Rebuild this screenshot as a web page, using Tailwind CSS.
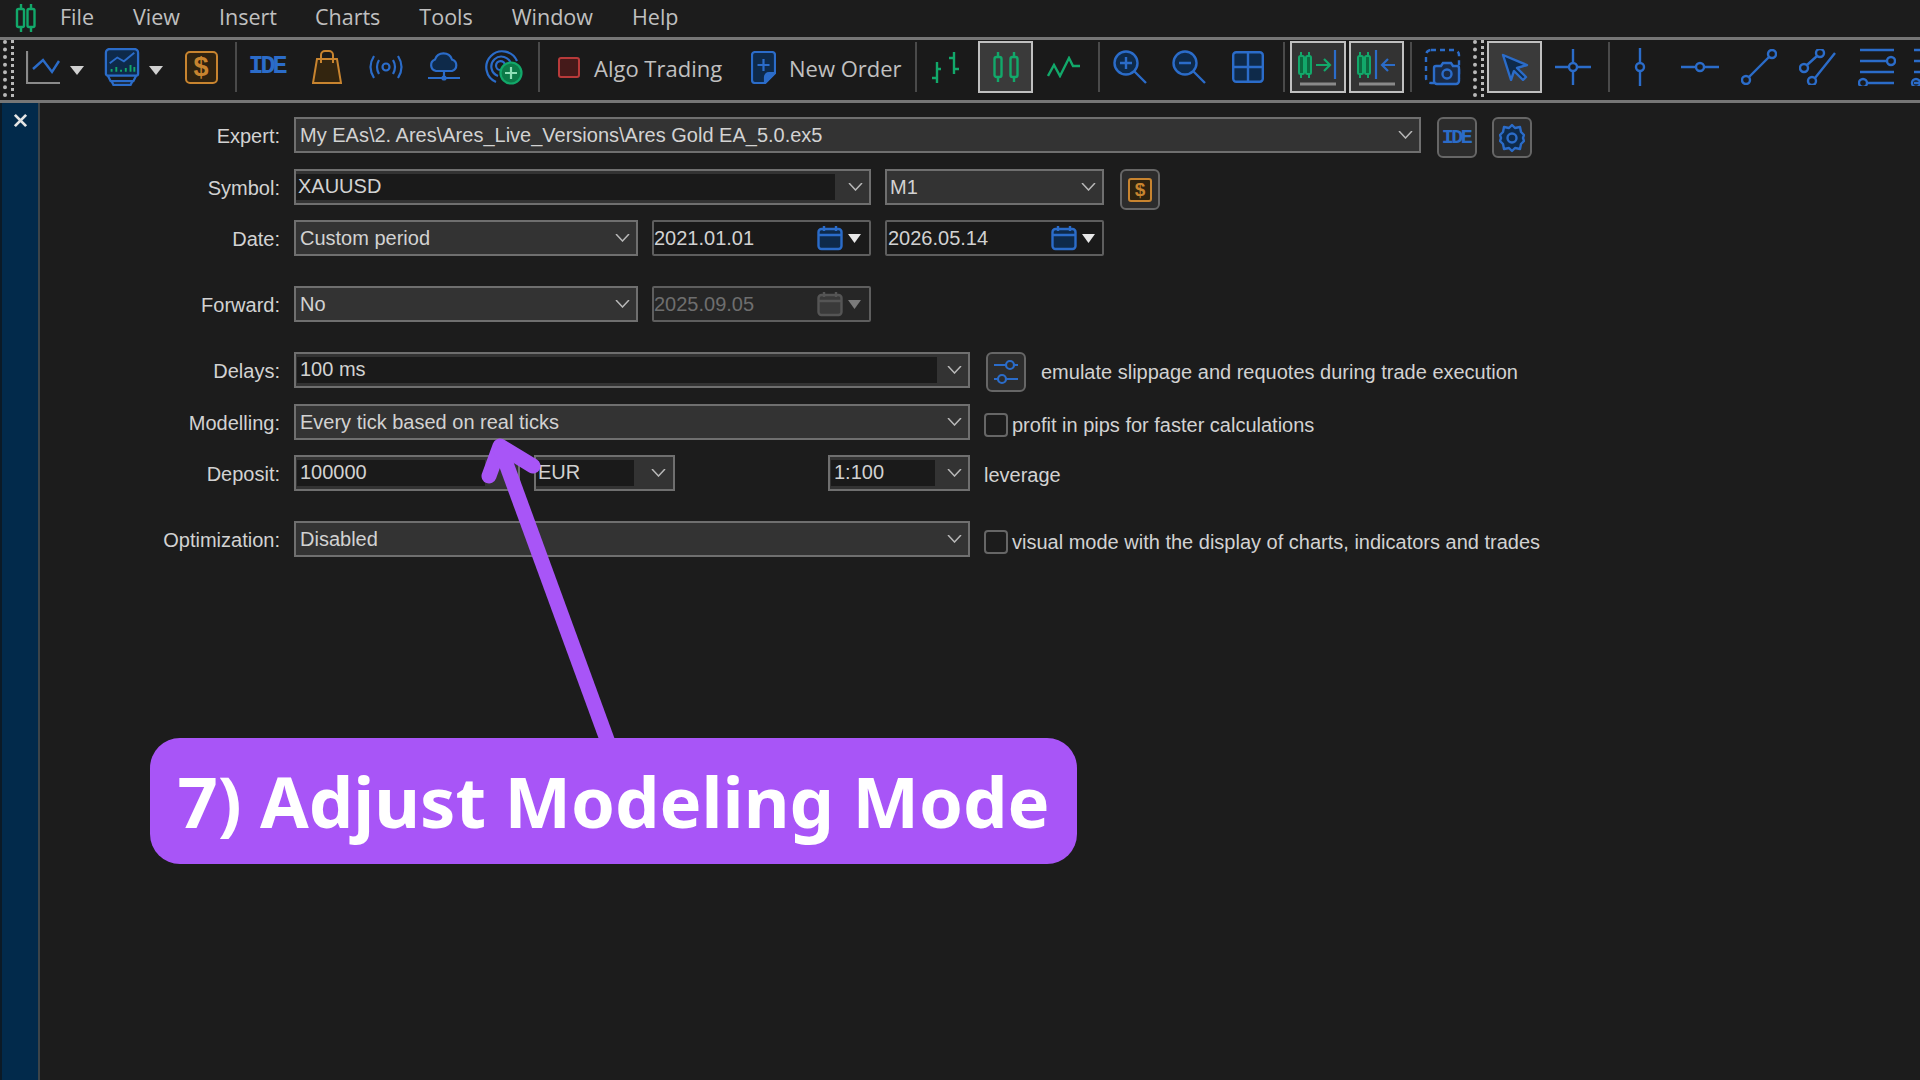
<!doctype html>
<html><head><meta charset="utf-8"><script src="https://cdn.jsdelivr.net/npm/@tailwindcss/browser@4"></script></head>
<body class="bg-[#1c1c1c] m-0">
<div class="relative w-[1920px] h-[1080px] overflow-hidden bg-[#1c1c1c] font-['Liberation_Sans'] text-[20px] text-[#d2d2d2] flex flex-col">

<!-- menu bar -->
<div class="h-[37px] flex items-center shrink-0 font-['Open_Sans'] text-[21.5px] text-[#c0c0c0] pb-[2px]">
  <svg class="ml-[14px] w-[24px] h-[32px]" viewBox="0 0 24 32" fill="none" stroke="#12a86a" stroke-width="2.4"><path d="M7 2v5M7 25v5M17 2v5M17 25v5"/><rect x="3" y="7" width="7" height="18" rx="1.5"/><rect x="13.500" y="7" width="7" height="18" rx="1.5"/></svg>
  <span class="ml-[22px]">File</span><span class="ml-[39px]">View</span><span class="ml-[39px]">Insert</span><span class="ml-[38px]">Charts</span><span class="ml-[39px]">Tools</span><span class="ml-[39px]">Window</span><span class="ml-[39px]">Help</span>
</div>

<!-- toolbar -->
<div class="h-[66px] shrink-0 border-y-[3px] border-[#767676] bg-[#1a1a1a] flex items-start text-[#c0c0c0] font-['Open_Sans'] text-[22px]">
  <div class="w-[24px] h-[57px] flex gap-[4px] pl-[3px]"><div class="w-[4px] h-full border-l-[4px] border-dotted border-[#b8b8b8]"></div><div class="w-[4px] h-full border-l-[3px] border-dotted border-[#b8b8b8]"></div></div>

  <div class="w-[40px] h-[52px] flex items-center justify-center mt-[1px]"><svg class="w-[36px] h-[36px]" viewBox="0 0 36 36" fill="none"><path d="M1 2v32h33" stroke="#8a8a8a" stroke-width="2.2"/><path d="M7 20l10-9 9 12 7-11" stroke="#2b6cc9" stroke-width="2.4"/></svg></div>
  <div class="w-[26px] h-[52px] flex items-center justify-center mt-[4px]"><svg class="w-[14px] h-[9px]" viewBox="0 0 14 9"><path d="M0 0h14l-7 9z" fill="#d0d0d0"/></svg></div>
  <div class="ml-[10px] w-[43px] h-[52px] flex items-center justify-center mt-[1px]"><svg class="w-[36px] h-[38px]" viewBox="0 0 38 40" fill="none" stroke="#2b6cc9" stroke-width="2.4"><path d="M6 1h26a4 4 0 0 1 4 4v22a2 2 0 0 1-2 2H4a2 2 0 0 1-2-2V5a4 4 0 0 1 4-4z" fill="#0e2a4a"/><path d="M4 29l3 6h24l3-6M8 35l2 4h18l2-4" /><path d="M6 16l8-6 7 4 11-9" stroke-width="2"/><path d="M8 25v-3M13 25v-5M18 25v-2M23 25v-4M28 25v-7M32 25v-5" stroke="#12a86a" stroke-width="2"/></svg></div>
  <div class="ml-[1px] w-[24px] h-[52px] flex items-center justify-center mt-[4px]"><svg class="w-[14px] h-[9px]" viewBox="0 0 14 9"><path d="M0 0h14l-7 9z" fill="#d0d0d0"/></svg></div>
  <div class="w-[66px] h-[52px] flex items-center justify-center mt-[1px]"><div class="w-[33px] h-[33px] border-2 border-[#c8842f] rounded-[5px] bg-[#2e2210] text-[#c8842f] flex items-center justify-center font-bold text-[27px] font-['Liberation_Sans'] leading-none">$</div></div>
  <div class="w-[2px] h-[50px] mt-[2px] bg-[#4a4a4a] ml-[1px]"></div>

  <div class="w-[62px] h-[52px] flex items-center justify-center mt-[1px] text-[#2b6cc9] font-['Liberation_Mono'] font-bold text-[25px] tracking-[-3px] pr-[3px]">IDE</div>
  <div class="w-[56px] h-[52px] flex items-center justify-center mt-[1px]"><svg class="w-[30px] h-[34px]" viewBox="0 0 30 34" fill="none" stroke="#c8842f" stroke-width="2"><path d="M5 9h20l4 24H1z" fill="#33250f"/><path d="M9 13V5a4 4 0 0 1 4-4h4a4 4 0 0 1 4 4v8"/></svg></div>
  <div class="w-[62px] h-[52px] flex items-center justify-center mt-[1px]"><svg class="w-[34px] h-[24px]" viewBox="0 0 34 24" fill="none" stroke="#2b6cc9" stroke-width="2.2"><circle cx="17" cy="12" r="3.500"/><path d="M10 5q-4 7 0 14M24 5q4 7 0 14M5 1q-7 11 0 22M29 1q7 11 0 22"/></svg></div>
  <div class="w-[54px] h-[52px] flex items-center justify-center mt-[1px]"><svg class="w-[34px] h-[30px]" viewBox="0 0 34 30" fill="none" stroke="#2b6cc9" stroke-width="2.2"><path d="M9 19a6 6 0 0 1-1-11.500a9 9 0 0 1 17 0a6 6 0 0 1 0 11.500z" fill="#0e2a4a"/><path d="M17 19v7M1 26h32" /><circle cx="17" cy="26" r="1.500"/></svg></div>
  <div class="w-[66px] h-[52px] flex items-center justify-center mt-[1px]"><svg class="w-[38px] h-[36px]" viewBox="0 0 38 36" fill="none" stroke="#2b6cc9" stroke-width="2.2"><path d="M11 33A16 16 0 1 1 32 12"/><path d="M13 27A10 10 0 1 1 26 15"/><path d="M15 21a4.500 4.500 0 1 1 5-5"/><circle cx="26" cy="24" r="10.500" fill="#0c7a48" stroke="#12a86a"/><path d="M26 18v12M20 24h12" stroke="#8fe0b8"/></svg></div>
  <div class="w-[2px] h-[50px] mt-[2px] bg-[#4a4a4a] ml-[1px]"></div>

  <div class="ml-[18px] h-[52px] flex items-center mt-[1px]"><div class="w-[22px] h-[21px] rounded-[3px] border-2 border-[#b83a3a] bg-[#451a1a]"></div><span class="ml-[14px] whitespace-nowrap w-[130px] pt-[2px]">Algo Trading</span></div>
  <div class="ml-[27px] h-[52px] flex items-center mt-[1px]"><svg class="w-[25px] h-[33px]" viewBox="0 0 25 33" fill="none" stroke="#2b6cc9" stroke-width="2.2"><path d="M4 1h17a3 3 0 0 1 3 3v18l-10 10H4a3 3 0 0 1-3-3V4a3 3 0 0 1 3-3z" fill="#0e2a4a"/><path d="M24 22h-6a4 4 0 0 0-4 4v6z" fill="#2b6cc9"/><path d="M12.500 8v12M6.500 14h12"/></svg><span class="ml-[13px] whitespace-nowrap w-[108px] pt-[2px]">New Order</span></div>
  <div class="ml-[18px] w-[2px] h-[50px] mt-[2px] bg-[#4a4a4a]"></div>

  <div class="w-[58px] h-[52px] flex items-center justify-center mt-[1px]"><svg class="w-[32px] h-[32px]" viewBox="0 0 32 32" fill="none" stroke="#12a86a" stroke-width="2.4"><path d="M7 11v21M2 27h5M7 18h4M24 1v22M19 7h5M24 18h5"/></svg></div>
  <div class="ml-[3px] mt-[1px] w-[55px] h-[52px] border-2 border-[#c0c0c0] bg-[#3a3a3a] flex items-center justify-center"><svg class="w-[26px] h-[32px]" viewBox="0 0 26 32" fill="none" stroke="#12a86a" stroke-width="2.400"><path d="M5 1v5M5 26v5M21 1v5M21 26v5"/><rect x="1.500" y="6" width="7" height="20" rx="2"/><rect x="17.500" y="6" width="7" height="20" rx="2"/></svg></div>
  <div class="ml-[3px] w-[56px] h-[52px] flex items-center justify-center mt-[1px]"><svg class="w-[34px] h-[22px]" viewBox="0 0 34 22" fill="none" stroke="#12a86a" stroke-width="2.4"><path d="M1 20l6-11 6 11 9-18 4 8h7"/></svg></div>
  <div class="ml-[6px] w-[2px] h-[50px] mt-[2px] bg-[#4a4a4a]"></div>

  <div class="w-[59px] h-[52px] flex items-center justify-center mt-[1px]"><svg class="w-[34px] h-[34px]" viewBox="0 0 34 34" fill="none" stroke="#2b6cc9" stroke-width="2.4"><circle cx="13" cy="13" r="11.500" fill="#0e2a4a"/><path d="M21 21l12 12M13 7v12M7 13h12"/></svg></div>
  <div class="w-[59px] h-[52px] flex items-center justify-center mt-[1px]"><svg class="w-[34px] h-[34px]" viewBox="0 0 34 34" fill="none" stroke="#2b6cc9" stroke-width="2.4"><circle cx="13" cy="13" r="11.500" fill="#0e2a4a"/><path d="M21 21l12 12M7 13h12"/></svg></div>
  <div class="w-[60px] h-[52px] flex items-center justify-center mt-[1px]"><svg class="w-[32px] h-[32px]" viewBox="0 0 32 32" fill="none" stroke="#2b6cc9" stroke-width="2.4"><rect x="1.200" y="1.200" width="29.600" height="29.600" rx="3" fill="#0e2a4a"/><path d="M16 1v30M1 16h30"/></svg></div>
  <div class="ml-[5px] w-[2px] h-[50px] mt-[2px] bg-[#4a4a4a]"></div>

  <div class="ml-[5px] mt-[1px] w-[56px] h-[52px] border-2 border-[#c0c0c0] bg-[#333333] flex items-center justify-center"><svg class="w-[40px] h-[38px]" viewBox="0 0 40 38" fill="none" stroke-width="2"><path d="M3 4v26M11 4v26" stroke="#12a86a"/><rect x="1" y="8" width="5" height="18" rx="1.500" stroke="#12a86a" fill="#0c6a40"/><rect x="8" y="8" width="5" height="18" rx="1.500" stroke="#12a86a" fill="#0c6a40"/><path d="M18 17h14M26 11l6 6-6 6" stroke="#12a86a" stroke-width="2.200"/><path d="M37 2v29" stroke="#2b6cc9" stroke-width="2.200"/><path d="M2 36h36" stroke="#8a8a8a" stroke-width="3"/></svg></div>
  <div class="ml-[3px] mt-[1px] w-[55px] h-[52px] border-2 border-[#c0c0c0] bg-[#333333] flex items-center justify-center"><svg class="w-[40px] h-[38px]" viewBox="0 0 40 38" fill="none" stroke-width="2"><path d="M3 4v26M11 4v26" stroke="#12a86a"/><rect x="1" y="8" width="5" height="18" rx="1.500" stroke="#12a86a" fill="#0c6a40"/><rect x="8" y="8" width="5" height="18" rx="1.500" stroke="#12a86a" fill="#0c6a40"/><path d="M19 2v29" stroke="#2b6cc9" stroke-width="2.200"/><path d="M38 17H25M31 11l-6 6 6 6" stroke="#2b6cc9" stroke-width="2.200"/><path d="M2 36h36" stroke="#8a8a8a" stroke-width="3"/></svg></div>
  <div class="ml-[6px] w-[2px] h-[50px] mt-[2px] bg-[#4a4a4a]"></div>

  <div class="w-[60px] h-[52px] flex items-center justify-center mt-[1px]"><svg class="w-[38px] h-[38px]" viewBox="0 0 38 38" fill="none" stroke="#2b6cc9" stroke-width="2.400"><rect x="3" y="2" width="33" height="33" rx="5" stroke-dasharray="5 4"/><path d="M11 20a2 2 0 0 1 2-2h5l2-3h8l2 3h4a2 2 0 0 1 2 2v13a3 3 0 0 1-3 3H14a3 3 0 0 1-3-3z" fill="#1a2a44"/><circle cx="24" cy="26" r="4.500"/></svg></div>
  <div class="ml-[1px] w-[12px] h-[57px] flex gap-[4px]"><div class="w-[4px] h-full border-l-[4px] border-dotted border-[#b8b8b8]"></div><div class="w-[3px] h-full border-l-[3px] border-dotted border-[#b8b8b8]"></div></div>
  <div class="ml-[2px] mt-[1px] w-[55px] h-[52px] border-2 border-[#c0c0c0] bg-[#3a3a3a] flex items-center justify-center"><svg class="w-[28px] h-[28px]" viewBox="0 0 28 28" fill="none"><path d="M2 2l24 10-10 3 9 9-3 3-9-9-3 9z" fill="#0e2a4a" stroke="#2b6cc9" stroke-width="2.400" stroke-linejoin="round"/></svg></div>
  <div class="ml-[2px] w-[58px] h-[52px] flex items-center justify-center mt-[1px]"><svg class="w-[36px] h-[36px]" viewBox="0 0 36 36" fill="none" stroke="#2b6cc9" stroke-width="2.400"><circle cx="18" cy="18" r="4"/><path d="M18 0v14M18 22v14M0 18h14M22 18h14"/></svg></div>
  <div class="ml-[6px] w-[2px] h-[50px] mt-[2px] bg-[#4a4a4a]"></div>

  <div class="w-[60px] h-[52px] flex items-center justify-center mt-[1px]"><svg class="w-[16px] h-[38px]" viewBox="0 0 16 38" fill="none" stroke="#2b6cc9" stroke-width="2.400"><circle cx="8" cy="19" r="4"/><path d="M8 0v15M8 23v15"/></svg></div>
  <div class="w-[59px] h-[52px] flex items-center justify-center mt-[1px]"><svg class="w-[38px] h-[12px]" viewBox="0 0 38 12" fill="none" stroke="#2b6cc9" stroke-width="2.400"><circle cx="19" cy="6" r="4"/><path d="M0 6h15M23 6h15"/></svg></div>
  <div class="w-[59px] h-[52px] flex items-center justify-center mt-[1px]"><svg class="w-[36px] h-[36px]" viewBox="0 0 36 36" fill="none" stroke="#2b6cc9" stroke-width="2.400"><circle cx="5" cy="31" r="4"/><circle cx="31" cy="5" r="4"/><path d="M8 28L28 8"/></svg></div>
  <div class="w-[59px] h-[52px] flex items-center justify-center mt-[1px]"><svg class="w-[38px] h-[36px]" viewBox="0 0 38 36" fill="none" stroke="#2b6cc9" stroke-width="2.400"><circle cx="5" cy="19" r="4"/><circle cx="21" cy="4" r="4"/><circle cx="13" cy="32" r="4"/><path d="M8 16l10-9M16 29L36 4"/></svg></div>
  <div class="w-[59px] h-[52px] flex items-center justify-center mt-[1px]"><svg class="w-[38px] h-[38px]" viewBox="0 0 38 38" fill="none" stroke="#2b6cc9" stroke-width="2.400"><path d="M2 2h34M2 13h28M2 24h34M9 35h27"/><circle cx="33" cy="13" r="4" fill="#1a1a1a"/><circle cx="5" cy="35" r="4" fill="#1a1a1a"/></svg></div>
  <div class="ml-[4px] h-[52px] flex items-center mt-[1px]"><svg class="w-[10px] h-[38px]" viewBox="0 0 10 38" fill="none" stroke="#2b6cc9" stroke-width="2.400"><path d="M4 2h6M4 13h6M4 24h6M4 35h6"/><circle cx="6" cy="35" r="4"/></svg></div>
</div>

<!-- body -->
<div class="flex-1 flex min-h-0">
  <div class="w-[40px] shrink-0 bg-[#022a4b] border-l-[2px] border-l-[#0c1a26] border-r-[2px] border-r-[#3d4448] flex justify-center pt-[10px]">
    <svg class="w-[15px] h-[15px]" viewBox="0 0 16 16" fill="none" stroke="#e4e4e4" stroke-width="3"><path d="M2 2l12 12M14 2L2 14"/></svg>
  </div>
  <div class="flex-1 pt-[14px] flex flex-col">

    <!-- Expert -->
    <div class="flex items-start h-[36px]">
      <div class="w-[240px] text-right h-[36px] leading-[39px] shrink-0">Expert:</div>
      <div class="ml-[14px] w-[1127px] h-[36px] border-2 border-[#6f6f6f] bg-[#333333] flex items-center justify-between pl-[4px] pr-[6px]"><span>My EAs\2. Ares\Ares_Live_Versions\Ares Gold EA_5.0.ex5</span><svg class="w-[15px] h-[8px]" viewBox="0 0 15 8" fill="none" stroke="#b8b8b8" stroke-width="1.500"><path d="M1 0l6.500 7L14 0"/></svg></div>
      <div class="ml-[16px] w-[40px] h-[41px] border-2 border-[#666666] rounded-[6px] bg-[#2c2c2c] flex items-center justify-center text-[#2b6cc9] font-['Liberation_Mono'] font-bold text-[20px] tracking-[-2.500px] pr-[2px]">IDE</div>
      <div class="ml-[15px] w-[40px] h-[41px] border-2 border-[#666666] rounded-[6px] bg-[#2c2c2c] flex items-center justify-center"><svg class="w-[26px] h-[30px]" viewBox="0 0 26 30" fill="none" stroke="#2b6cc9" stroke-width="2.400"><path d="M13 2l3 3 5-1 1 5 3 3-1 3 1 3-3 3-1 5-5-1-3 3-3-3-5 1-1-5-3-3 1-3-1-3 3-3 1-5 5 1z" fill="#0e2a4a" stroke-linejoin="round"/><circle cx="13" cy="15" r="4.500"/></svg></div>
    </div>

    <!-- Symbol -->
    <div class="flex items-start h-[36px] mt-[16px]">
      <div class="w-[240px] text-right leading-[39px] shrink-0">Symbol:</div>
      <div class="ml-[14px] w-[577px] h-[36px] border-2 border-[#6f6f6f] bg-[#333333] flex items-center justify-between pr-[6px] py-[3px]"><span class="w-[539px] h-full bg-[#1a1a1a] pl-[2px] leading-[24px]">XAUUSD</span><svg class="w-[15px] h-[8px]" viewBox="0 0 15 8" fill="none" stroke="#b8b8b8" stroke-width="1.500"><path d="M1 0l6.500 7L14 0"/></svg></div>
      <div class="ml-[14px] w-[219px] h-[36px] border-2 border-[#6f6f6f] bg-[#333333] flex items-center justify-between pl-[3px] pr-[6px]"><span>M1</span><svg class="w-[15px] h-[8px]" viewBox="0 0 15 8" fill="none" stroke="#b8b8b8" stroke-width="1.500"><path d="M1 0l6.500 7L14 0"/></svg></div>
      <div class="ml-[16px] w-[40px] h-[41px] border-2 border-[#666666] rounded-[6px] bg-[#2c2c2c] flex items-center justify-center"><div class="w-[24px] h-[24px] border-2 border-[#c8842f] rounded-[3px] bg-[#2e2210] text-[#c8842f] flex items-center justify-center font-bold text-[19px] leading-none">$</div></div>
    </div>

    <!-- Date -->
    <div class="flex items-start h-[36px] mt-[15px]">
      <div class="w-[240px] text-right leading-[39px] shrink-0">Date:</div>
      <div class="ml-[14px] w-[344px] h-[36px] border-2 border-[#6f6f6f] bg-[#333333] flex items-center justify-between pl-[4px] pr-[6px]"><span>Custom period</span><svg class="w-[15px] h-[8px]" viewBox="0 0 15 8" fill="none" stroke="#b8b8b8" stroke-width="1.500"><path d="M1 0l6.500 7L14 0"/></svg></div>
      <div class="ml-[14px] w-[219px] h-[36px] border-2 border-[#5e5e5e] rounded-[2px] bg-[#1a1a1a] flex items-center pl-[0px] pr-[8px]"><span class="flex-1">2021.01.01</span><svg class="w-[26px] h-[26px]" viewBox="0 0 26 26" fill="none" stroke="#2b6cc9" stroke-width="2.400"><rect x="1.500" y="4" width="23" height="20" rx="3" fill="#0e2a4a"/><path d="M1.500 10h23M7 1v5M19 1v5"/></svg><svg class="ml-[5px] w-[13px] h-[9px]" viewBox="0 0 13 9"><path d="M0 0h13L6.500 9z" fill="#e8e8e8"/></svg></div>
      <div class="ml-[14px] w-[219px] h-[36px] border-2 border-[#5e5e5e] rounded-[2px] bg-[#1a1a1a] flex items-center pl-[1px] pr-[7px]"><span class="flex-1">2026.05.14</span><svg class="w-[26px] h-[26px]" viewBox="0 0 26 26" fill="none" stroke="#2b6cc9" stroke-width="2.400"><rect x="1.500" y="4" width="23" height="20" rx="3" fill="#0e2a4a"/><path d="M1.500 10h23M7 1v5M19 1v5"/></svg><svg class="ml-[5px] w-[13px] h-[9px]" viewBox="0 0 13 9"><path d="M0 0h13L6.500 9z" fill="#e8e8e8"/></svg></div>
    </div>

    <!-- Forward -->
    <div class="flex items-start h-[36px] mt-[30px]">
      <div class="w-[240px] text-right leading-[39px] shrink-0">Forward:</div>
      <div class="ml-[14px] w-[344px] h-[36px] border-2 border-[#6f6f6f] bg-[#333333] flex items-center justify-between pl-[4px] pr-[6px]"><span>No</span><svg class="w-[15px] h-[8px]" viewBox="0 0 15 8" fill="none" stroke="#b8b8b8" stroke-width="1.500"><path d="M1 0l6.500 7L14 0"/></svg></div>
      <div class="ml-[14px] w-[219px] h-[36px] border-2 border-[#5e5e5e] rounded-[2px] bg-[#262626] flex items-center pl-[0px] pr-[8px] text-[#6e6e6e]"><span class="flex-1">2025.09.05</span><svg class="w-[26px] h-[26px]" viewBox="0 0 26 26" fill="#3a3a3a" stroke="#555555" stroke-width="2.400"><rect x="1.500" y="4" width="23" height="20" rx="3"/><path d="M1.500 10h23M7 1v5M19 1v5"/></svg><svg class="ml-[5px] w-[13px] h-[9px]" viewBox="0 0 13 9"><path d="M0 0h13L6.500 9z" fill="#7a7a7a"/></svg></div>
    </div>

    <!-- Delays -->
    <div class="flex items-start h-[36px] mt-[30px]">
      <div class="w-[240px] text-right leading-[39px] shrink-0">Delays:</div>
      <div class="ml-[14px] w-[676px] h-[36px] border-2 border-[#6f6f6f] bg-[#333333] flex items-center justify-between pr-[6px] pl-[1px] py-[3px]"><span class="w-[640px] h-full bg-[#1a1a1a] pl-[3px] leading-[24px]">100 ms</span><svg class="w-[15px] h-[8px]" viewBox="0 0 15 8" fill="none" stroke="#b8b8b8" stroke-width="1.500"><path d="M1 0l6.500 7L14 0"/></svg></div>
      <div class="ml-[16px] w-[40px] h-[40px] border-2 border-[#666666] rounded-[6px] bg-[#2c2c2c] flex items-center justify-center"><svg class="w-[26px] h-[26px]" viewBox="0 0 26 26" fill="none" stroke="#2b6cc9" stroke-width="2.200"><path d="M1 6h12M21 6h4M1 20h4M13 20h12"/><circle cx="17" cy="6" r="4"/><circle cx="9" cy="20" r="4"/></svg></div>
      <div class="ml-[15px] leading-[40px] whitespace-nowrap">emulate slippage and requotes during trade execution</div>
    </div>

    <!-- Modelling -->
    <div class="flex items-start h-[36px] mt-[16px]">
      <div class="w-[240px] text-right leading-[39px] shrink-0">Modelling:</div>
      <div class="ml-[14px] w-[676px] h-[36px] border-2 border-[#6f6f6f] bg-[#333333] flex items-center justify-between pl-[4px] pr-[6px]"><span>Every tick based on real ticks</span><svg class="w-[15px] h-[8px]" viewBox="0 0 15 8" fill="none" stroke="#b8b8b8" stroke-width="1.500"><path d="M1 0l6.500 7L14 0"/></svg></div>
      <div class="ml-[14px] mt-[9px] w-[24px] h-[24px] border-2 border-[#666666] rounded-[4px] bg-[#1c1c1c] shrink-0"></div>
      <div class="ml-[4px] mt-[1px] leading-[40px] whitespace-nowrap">profit in pips for faster calculations</div>
    </div>

    <!-- Deposit -->
    <div class="flex items-start h-[36px] mt-[15px]">
      <div class="w-[240px] text-right leading-[39px] shrink-0">Deposit:</div>
      <div class="ml-[14px] w-[226px] h-[36px] border-2 border-[#6f6f6f] bg-[#333333] flex items-center pr-[1px] pl-[1px] py-[3px]"><span class="w-[188px] h-full bg-[#1a1a1a] pl-[3px] leading-[24px]">100000</span></div>
      <div class="ml-[14px] w-[141px] h-[36px] border-2 border-[#6f6f6f] bg-[#333333] flex items-center justify-between pr-[7px] py-[3px]"><span class="w-[98px] h-full bg-[#1a1a1a] pl-[2px] leading-[24px]">EUR</span><svg class="w-[15px] h-[8px]" viewBox="0 0 15 8" fill="none" stroke="#b8b8b8" stroke-width="1.500"><path d="M1 0l6.500 7L14 0"/></svg></div>
      <div class="ml-[153px] w-[142px] h-[36px] border-2 border-[#6f6f6f] bg-[#333333] flex items-center justify-between pr-[6px] pl-[1px] py-[3px]"><span class="w-[104px] h-full bg-[#1a1a1a] pl-[3px] leading-[24px]">1:100</span><svg class="w-[15px] h-[8px]" viewBox="0 0 15 8" fill="none" stroke="#b8b8b8" stroke-width="1.500"><path d="M1 0l6.500 7L14 0"/></svg></div>
      <div class="ml-[14px] leading-[40px] whitespace-nowrap">leverage</div>
    </div>

    <!-- Optimization -->
    <div class="flex items-start h-[36px] mt-[30px]">
      <div class="w-[240px] text-right leading-[39px] shrink-0">Optimization:</div>
      <div class="ml-[14px] w-[676px] h-[36px] border-2 border-[#6f6f6f] bg-[#333333] flex items-center justify-between pl-[4px] pr-[6px]"><span>Disabled</span><svg class="w-[15px] h-[8px]" viewBox="0 0 15 8" fill="none" stroke="#b8b8b8" stroke-width="1.500"><path d="M1 0l6.500 7L14 0"/></svg></div>
      <div class="ml-[14px] mt-[9px] w-[24px] h-[24px] border-2 border-[#666666] rounded-[4px] bg-[#1c1c1c] shrink-0"></div>
      <div class="ml-[4px] mt-[1px] leading-[40px] whitespace-nowrap">visual mode with the display of charts, indicators and trades</div>
    </div>
  </div>
</div>

<!-- annotation arrow -->
<svg class="absolute left-0 top-0 w-[1920px] h-[1080px] pointer-events-none" viewBox="0 0 1920 1080" fill="none" stroke="#a855f7" stroke-width="15" stroke-linecap="round" stroke-linejoin="round"><path d="M489 476l11-30 33 20"/><path d="M500 447L609 745" stroke-linecap="butt"/></svg>

<!-- callout -->
<div class="absolute left-[150px] top-[738px] w-[927px] h-[126px] rounded-[30px] bg-[#a855f7] flex items-center justify-center text-white font-['Noto_Sans'] font-bold text-[70.5px] whitespace-nowrap leading-none">7) Adjust Modeling Mode</div>
</div>
</body></html>
